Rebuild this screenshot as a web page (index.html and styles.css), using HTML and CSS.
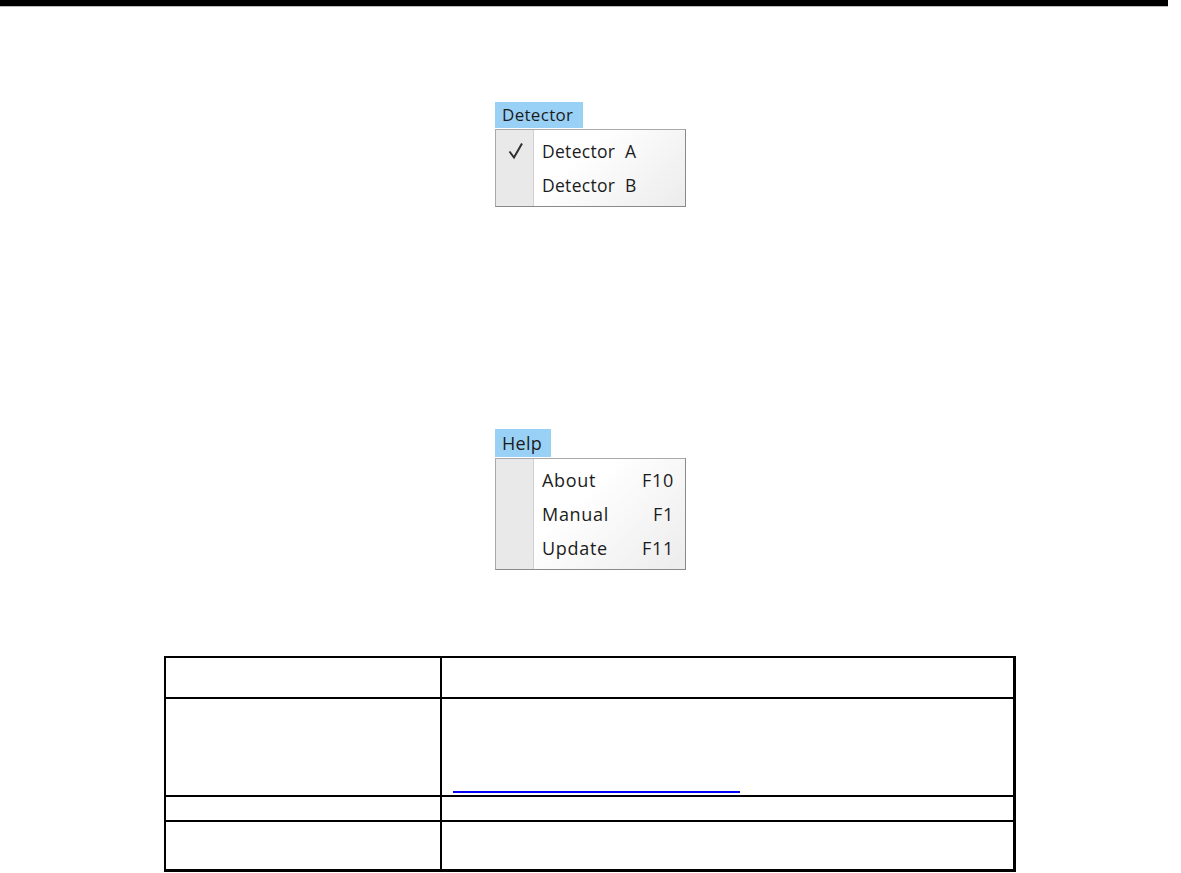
FILE: index.html
```html
<!DOCTYPE html>
<html lang="en">
<head>
    <meta charset="UTF-8">
    <title>Menus</title>
    <link rel="stylesheet" href="styles.css">
</head>
<body>

    <div class="top-rule"></div>

    <div class="menu-block detector">
        <div class="menu-title">Detector</div>
        <div class="menu">
            <div class="menu-item">
                <span class="gutter">
                    <svg class="check" width="16" height="18" viewBox="0 0 16 18">
                        <polyline points="1.5,9.5 6,15.5 14,1.5" fill="none" stroke="#2e2e2e" stroke-width="2"/>
                    </svg>
                </span>
                <span class="label">Detector&nbsp; A</span>
            </div>
            <div class="menu-item">
                <span class="gutter"></span>
                <span class="label">Detector&nbsp; B</span>
            </div>
        </div>
    </div>

    <div class="menu-block help">
        <div class="menu-title">Help</div>
        <div class="menu">
            <div class="menu-item">
                <span class="gutter"></span>
                <span class="label">About</span>
                <span class="key">F10</span>
            </div>
            <div class="menu-item">
                <span class="gutter"></span>
                <span class="label">Manual</span>
                <span class="key">F1</span>
            </div>
            <div class="menu-item">
                <span class="gutter"></span>
                <span class="label">Update</span>
                <span class="key">F11</span>
            </div>
        </div>
    </div>

    <table class="info">
        <tr class="r1"><td></td><td></td></tr>
        <tr class="r2"><td></td><td><a class="link" href="#">&nbsp;</a></td></tr>
        <tr class="r3"><td></td><td></td></tr>
        <tr class="r4"><td></td><td></td></tr>
    </table>

</body>
</html>
```

FILE: styles.css
```css
body {
    margin: 0;
    font-family: 'Open Sans', 'Noto Sans', sans-serif;
    background: #fff;
    color: #1c1c1c;
}
.top-rule {
    width: 1168px;
    height: 6px;
    background: #000;
    border-bottom: 1px solid #bbb;
}
.menu-block {
    margin-left: 495px;
    width: 191px;
}
.detector {
    margin-top: 95px;
}
.help {
    margin-top: 222px;
}
.menu-title {
    display: inline-block;
    background: #99d1f6;
    font-size: 17px;
    line-height: 26px;
    padding: 0 10px 0 7px;
    letter-spacing: 0.3px;
    margin-bottom: 1px;
}
.help .menu-title {
    line-height: 28px;
    font-size: 18px;
    padding-right: 9px;
}
.menu {
    border: 1px solid #a9a9a9;
    border-right-color: #8a8a8a;
    border-bottom-color: #8a8a8a;
    padding: 4px 0;
    background: linear-gradient(135deg, #ffffff 40%, #ececec 100%);
    position: relative;
}
.menu::before {
    content: '';
    position: absolute;
    left: 0;
    top: 0;
    bottom: 0;
    width: 37px;
    background: #e9e9e9;
    border-right: 1px solid #d0d0d0;
}
.menu-item {
    display: flex;
    align-items: center;
    height: 34px;
    position: relative;
    font-size: 17.5px;
    letter-spacing: 0.3px;
}
.help .menu-item {
    font-size: 18px;
    letter-spacing: 0.7px;
}
.gutter {
    width: 38px;
    display: flex;
    justify-content: center;
    flex: none;
}
.check {
    display: block;
    margin-left: 1px;
}
.label {
    margin-left: 8px;
    flex: 1;
}
.key {
    margin-right: 11px;
}
.info {
    margin: 86px 0 0 164px;
    border-collapse: collapse;
    border-left: 2px solid #000;
    border-top: 2px solid #000;
    border-right: 3px solid #000;
    border-bottom: 3px solid #000;
}
.info td {
    border: 2px solid #000;
    padding: 0;
    vertical-align: bottom;
}
.info td:first-child {
    width: 274px;
}
.info td:last-child {
    width: 571px;
    border-right: 3px solid #000;
}
.info tr:last-child td {
    border-bottom: 3px solid #000;
}
.r1 td { height: 39px; }
.r2 td { height: 96px; }
.r3 td { height: 23px; }
.r4 td { height: 47px; }
.link {
    display: inline-block;
    width: 287px;
    margin: 0 0 1px 11px;
    font-size: 4px;
    line-height: 4px;
    border-bottom: 2px solid #0000ff;
    text-decoration: none;
}
```
